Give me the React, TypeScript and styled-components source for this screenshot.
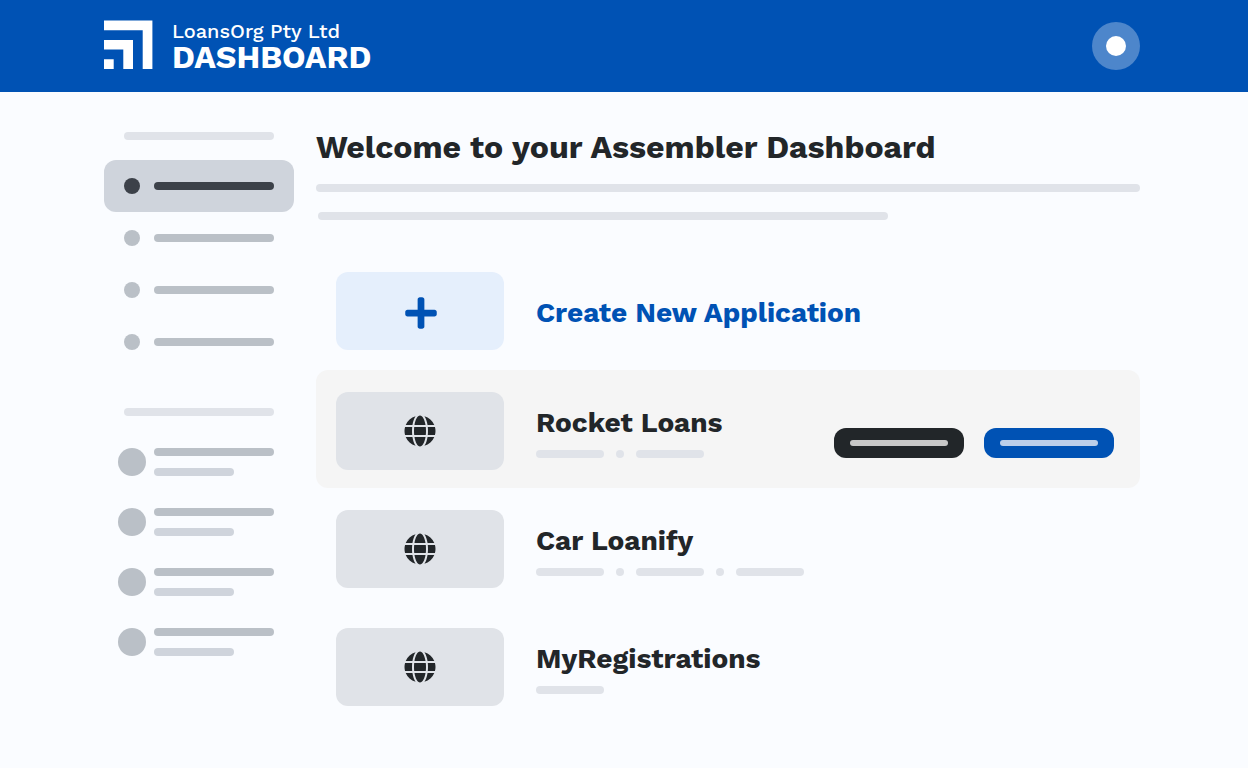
import React from "react";
import styled, { createGlobalStyle } from "styled-components";
import { FaGlobe, FaPlus } from "react-icons/fa";

const color = {
  page: "#fafcff",
  brand: "#0052b4",
  ink: "#222629",
  line: "#e0e3e9",
  muted: "#bac0c7",
  soft: "#cfd4dc",
  strong: "#3c4149",
};

const GlobalStyle = createGlobalStyle`
  *, *::before, *::after { box-sizing: border-box; }
  body {
    margin: 0;
    background: ${color.page};
    color: ${color.ink};
    font-family: "Work Sans", Inter, "Liberation Sans", sans-serif;
  }
  ul { list-style: none; margin: 0; padding: 0; }
`;

const TopBar = styled.header`
  display: flex;
  align-items: center;
  justify-content: space-between;
  height: 92px;
  padding: 0 108px 0 104px;
  background: ${color.brand};
  color: #fff;
`;

const Brand = styled.a`
  display: flex;
  align-items: flex-start;
  gap: 19px;
  color: inherit;
  text-decoration: none;
`;

const Logo = styled.svg`
  width: 49px;
  height: 49px;
  fill: currentColor;
`;

const BrandText = styled.div`
  display: flex;
  flex-direction: column;
`;

const Company = styled.span`
  font-size: 20px;
  font-weight: 500;
  line-height: 22px;
`;

const Product = styled.span`
  font-size: 32px;
  font-weight: 700;
  line-height: 30px;
`;

const Avatar = styled.button`
  display: grid;
  place-items: center;
  width: 48px;
  height: 48px;
  padding: 0;
  border: 0;
  border-radius: 50%;
  background: #4d86cb;
`;

const Dot = styled.span<{ $size: number; $color: string }>`
  flex: none;
  width: ${(p) => p.$size}px;
  height: ${(p) => p.$size}px;
  border-radius: 50%;
  background: ${(p) => p.$color};
`;

const Bar = styled.span<{ $width?: string; $color?: string; $thickness?: number }>`
  display: block;
  width: ${(p) => p.$width ?? "100%"};
  height: ${(p) => p.$thickness ?? 8}px;
  border-radius: 4px;
  background: ${(p) => p.$color ?? color.line};
`;

const Page = styled.div`
  display: flex;
  gap: 22px;
  padding: 40px 108px 40px 104px;
`;

const Sidebar = styled.nav`
  display: flex;
  flex: 0 0 190px;
  flex-direction: column;
`;

const SectionLabel = styled.div`
  padding: 0 20px;
`;

const NavList = styled.ul`
  && { margin: 20px 0 40px; }
`;

const NavLink = styled.a<{ $active?: boolean }>`
  display: flex;
  align-items: center;
  gap: 14px;
  height: 52px;
  padding: 0 20px;
  border-radius: 12px;
  background: ${(p) => (p.$active ? color.soft : "transparent")};
`;

const PeopleList = styled.ul`
  && {
    display: flex;
    flex-direction: column;
    gap: 32px;
    margin-top: 32px;
  }
`;

const PersonLink = styled.a`
  display: flex;
  gap: 8px;
  padding: 0 20px 0 14px;
`;

const PersonLines = styled.span`
  display: flex;
  flex: 1;
  flex-direction: column;
  gap: 12px;
`;

const Main = styled.main`
  flex: 1;
  min-width: 0;
`;

const PageTitle = styled.h1`
  margin: 0;
  font-size: 32px;
  font-weight: 700;
  line-height: 30px;
`;

const Intro = styled.div`
  display: flex;
  flex-direction: column;
  gap: 20px;
  margin: 22px 0 52px;
`;

const IntroTail = styled.div`
  padding-left: 2px;
`;

const Row = styled.li<{ $selected?: boolean }>`
  display: flex;
  align-items: center;
  gap: 32px;
  padding: 22px 26px 18px 20px;
  border-radius: 12px;
  background: ${(p) => (p.$selected ? "#f5f5f5" : "transparent")};
`;

const CreateLink = styled.a`
  display: flex;
  align-items: center;
  gap: 32px;
  margin-bottom: 20px;
  padding-left: 20px;
  color: ${color.brand};
  text-decoration: none;
`;

const Tile = styled.span<{ $primary?: boolean }>`
  display: grid;
  flex: none;
  place-items: center;
  width: 168px;
  height: 78px;
  padding: ${(p) => (p.$primary ? "4px 0 0 2px" : "0")};
  border-radius: 12px;
  background: ${(p) => (p.$primary ? "#e5effc" : "#e0e3e8")};
  font-size: ${(p) => (p.$primary ? 36 : 32)}px;
  svg { display: block; }
`;

const Details = styled.div`
  flex: 1;
  padding-top: 4px;
`;

const AppName = styled.h2`
  margin: 0;
  font-size: 28px;
  font-weight: 700;
  line-height: 30px;
`;

const Meta = styled.div`
  display: flex;
  gap: 12px;
  margin-top: 12px;
`;

const Actions = styled.div`
  display: flex;
  gap: 20px;
  padding-top: 24px;
`;

const ActionButton = styled.button<{ $primary?: boolean }>`
  width: 130px;
  height: 30px;
  padding: 0 16px;
  border: 0;
  border-radius: 12px;
  background: ${(p) => (p.$primary ? color.brand : color.ink)};
`;

const applications = [
  { name: "Rocket Loans", meta: 2, selected: true },
  { name: "Car Loanify", meta: 3, selected: false },
  { name: "MyRegistrations", meta: 1, selected: false },
];

const slots = [0, 1, 2, 3];

export default function App() {
  return (
    <>
      <GlobalStyle />
      <TopBar>
        <Brand href="#">
          <Logo viewBox="0 0 49 49" aria-hidden="true">
            <path d="M0 .5H48.4V49H38.7V10.2H0zM0 19.9H29V49H19.3V29.6H0zM0 39.3H9.7V49H0z" />
          </Logo>
          <BrandText>
            <Company>LoansOrg Pty Ltd</Company>
            <Product>DASHBOARD</Product>
          </BrandText>
        </Brand>
        <Avatar type="button" aria-label="Account">
          <Dot $size={20} $color="#fff" />
        </Avatar>
      </TopBar>
      <Page>
        <Sidebar aria-label="Main">
          <SectionLabel><Bar /></SectionLabel>
          <NavList>
            {slots.map((i) => (
              <li key={i}>
                <NavLink href="#" $active={i === 0} aria-label={`Section ${i + 1}`}>
                  <Dot $size={16} $color={i === 0 ? color.strong : color.muted} />
                  <Bar $color={i === 0 ? color.strong : color.muted} />
                </NavLink>
              </li>
            ))}
          </NavList>
          <SectionLabel><Bar /></SectionLabel>
          <PeopleList>
            {slots.map((i) => (
              <li key={i}>
                <PersonLink href="#" aria-label={`Member ${i + 1}`}>
                  <Dot $size={28} $color={color.muted} />
                  <PersonLines>
                    <Bar $color={color.muted} />
                    <Bar $color={color.soft} $width="80px" />
                  </PersonLines>
                </PersonLink>
              </li>
            ))}
          </PeopleList>
        </Sidebar>
        <Main>
          <PageTitle>Welcome to your Assembler Dashboard</PageTitle>
          <Intro>
            <Bar />
            <IntroTail><Bar $width="570px" /></IntroTail>
          </Intro>
          <CreateLink href="#">
            <Tile $primary><FaPlus /></Tile>
            <Details>
              <AppName>Create New Application</AppName>
            </Details>
          </CreateLink>
          <ul>
            {applications.map((app) => (
              <Row key={app.name} $selected={app.selected}>
                <Tile><FaGlobe /></Tile>
                <Details>
                  <AppName>{app.name}</AppName>
                  <Meta>
                    {Array.from({ length: app.meta }, (_, i) => (
                      <React.Fragment key={i}>
                        {i > 0 && <Dot $size={8} $color={color.line} />}
                        <Bar $width="68px" />
                      </React.Fragment>
                    ))}
                  </Meta>
                </Details>
                {app.selected && (
                  <Actions>
                    <ActionButton type="button" aria-label="View">
                      <Bar $color="#c8c8c8" $thickness={6} />
                    </ActionButton>
                    <ActionButton type="button" $primary aria-label="Edit">
                      <Bar $color="#bccfea" $thickness={6} />
                    </ActionButton>
                  </Actions>
                )}
              </Row>
            ))}
          </ul>
        </Main>
      </Page>
    </>
  );
}
